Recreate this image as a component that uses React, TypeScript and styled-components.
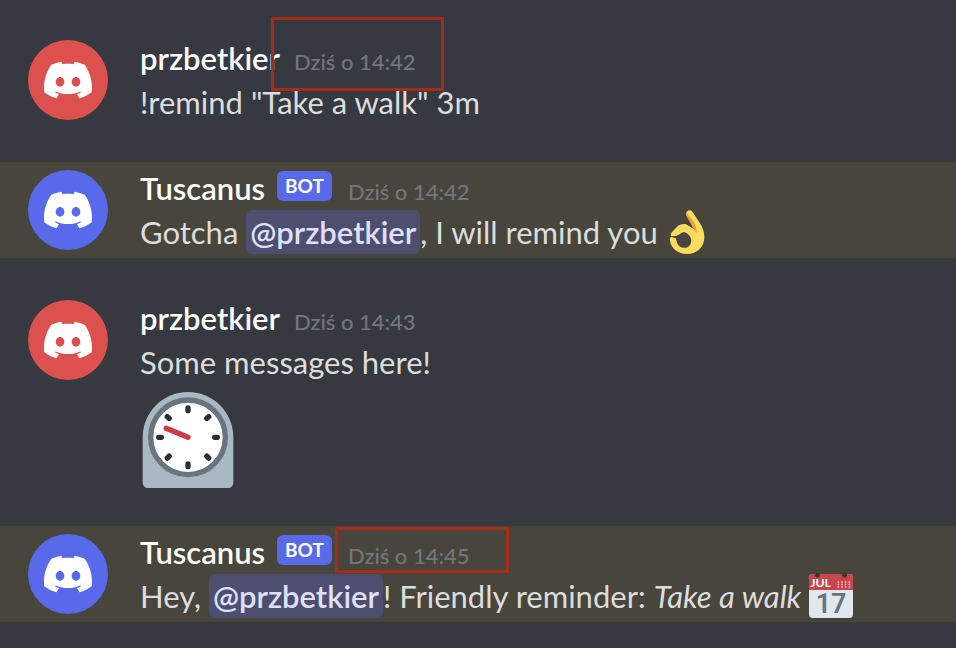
import React from "react";
import styled, { createGlobalStyle } from "styled-components";
import { SiDiscord } from "react-icons/si";

const GlobalStyle = createGlobalStyle`
  * { box-sizing: border-box; }
  body {
    margin: 0;
    background: #36393f;
    color: #dcddde;
    font-family: Lato, "Noto Sans", sans-serif;
    font-size: 31px;
    line-height: 44px;
  }
`;

const Chat = styled.main`
  display: flex;
  flex-direction: column;
  gap: 34px;
  padding: 32px 0 26px;
`;

const Row = styled.article<{ $mentioned?: boolean }>`
  display: flex;
  align-items: flex-start;
  gap: 32px;
  padding: 0 28px;
  background: ${(p) => (p.$mentioned ? "#48453d" : "transparent")};
`;

const Avatar = styled.div<{ $color: string }>`
  display: flex;
  flex: none;
  align-items: center;
  justify-content: center;
  width: 80px;
  height: 80px;
  margin-top: 8px;
  border-radius: 50%;
  background: ${(p) => p.$color};
  color: #fff;
`;

const Body = styled.div`
  flex: 1;
  min-width: 0;
  padding: 4px 0;
`;

const Header = styled.header`
  display: flex;
  align-items: baseline;
`;

const Name = styled.h2`
  margin: 0;
  color: #fff;
  font-size: 31px;
  font-weight: 600;
`;

const BotTag = styled.span`
  align-self: flex-start;
  margin: 5px 2px 0 12px;
  padding: 0 8px;
  border-radius: 6px;
  background: #5869ea;
  color: #fff;
  font-size: 19px;
  font-weight: 700;
  line-height: 30px;
`;

const Time = styled.time`
  position: relative;
  margin-left: 14px;
  color: #72767d;
  font-size: 22px;
  font-weight: 500;
  line-height: 30px;
`;

const Highlight = styled.span<{ $tall?: boolean }>`
  position: absolute;
  top: ${(p) => (p.$tall ? -30 : -14)}px;
  bottom: ${(p) => (p.$tall ? -14 : -2)}px;
  left: ${(p) => (p.$tall ? -23 : -13)}px;
  right: ${(p) => (p.$tall ? -28 : -39)}px;
  border: 3px solid #a62c1a;
  pointer-events: none;
`;

const Text = styled.p`
  margin: 0;
`;

const Mention = styled.a`
  padding: 3px 4px;
  border-radius: 6px;
  background: #4e4e70;
  color: #dee0fc;
  font-weight: 600;
  text-decoration: none;
`;

const Emoji = styled.svg`
  display: inline-block;
  width: 44px;
  height: 44px;
  overflow: visible;
  vertical-align: top;
`;

const BigEmoji = styled.svg`
  display: block;
  width: 96px;
  height: 96px;
  margin-top: 8px;
`;

const MonthText = styled.text`
  font-family: Lato, sans-serif;
  font-size: 10px;
  font-weight: 700;
`;

const DayText = styled.text`
  font-family: Roboto, sans-serif;
  font-size: 22px;
  font-weight: 600;
`;

function OkHand() {
  return (
    <Emoji viewBox="0 0 44 44" role="img" aria-label="OK hand">
      <path
        fill="#ffdc5d"
        d="M21 1.6C22.6-.3 25.2-.2 26.4 1.8L33.5 12.5C36.6 17.3 38.4 22 38.4 27C38.4 37 31 44 21 44C12 44 5 38.5 4 30.5C3.7 28.4 4.4 27 5.8 26.6C4.6 25.6 4.4 24 5.6 22.6L11 16.8C13.4 14.4 17.4 13.4 20.4 14.4L28 19L20.6 5.6C19.8 4.2 20 2.8 21 1.6z"
      />
      <path
        fill="#48453d"
        d="M10.8 25.8L16.3 22.6C18 22 20 22.4 21.8 24C24.4 26.4 25.8 29 25.2 32C24.4 36 21.6 38 18 37.8C14 37.6 11.4 35 10.8 31.4L9.8 28.2L5.4 26.9V26.2z"
      />
      <path
        fill="#ef9645"
        d="M20.6 3.2C19.8 4.4 20.2 5.4 20.8 6.6C23.2 11.4 25.4 14.6 27 18.2L30.6 23C31.2 18 28.2 12.6 24.6 7.8C23 5.6 21.8 5 20.6 3.2z"
      />
    </Emoji>
  );
}

function Calendar() {
  return (
    <Emoji viewBox="0 0 36 36" role="img" aria-label="Calendar">
      <rect width="36" height="36" rx="3" fill="#e1e8ed" />
      <path fill="#ca444b" d="M0 13V3a3 3 0 0 1 3-3h30a3 3 0 0 1 3 3v10z" />
      <g fill="#353534">
        <circle cx="7" cy="1" r="2" />
        <circle cx="29" cy="1" r="2" />
      </g>
      <MonthText x="1" y="11" fill="#fff">
        JUL
      </MonthText>
      <g fill="#f4abba">
        {[6.5, 8.6, 10.7].map((y) =>
          [24, 27, 30, 33].map((x) => <circle key={`${x}-${y}`} cx={x} cy={y} r=".8" />),
        )}
      </g>
      <DayText x="18" y="32" textAnchor="middle" fill="#66757f">
        17
      </DayText>
    </Emoji>
  );
}

function TimerClock() {
  return (
    <BigEmoji viewBox="0 0 36 36" role="img" aria-label="Timer clock">
      <path
        fill="#aab8c2"
        d="M18 0C8.6 0 1 7.6 1 17v17c0 1.1.9 2 2 2h30c1.1 0 2-.9 2-2V17C35 7.6 27.4 0 18 0z"
      />
      <circle cx="18" cy="17" r="14" fill="#fff" stroke="#66757f" strokeWidth="2" />
      <g stroke="#292f33" strokeWidth="2" strokeLinecap="round">
        {[0, 45, 90, 135, 180, 225, 270, 315].map((a) => (
          <path key={a} d="M18 6v1" transform={`rotate(${a} 18 17)`} />
        ))}
      </g>
      <path d="M18 17L9.8 13.6" stroke="#cc3a48" strokeWidth="2" strokeLinecap="round" />
    </BigEmoji>
  );
}

type MessageProps = {
  author: string;
  time: string;
  bot?: boolean;
  highlight?: "tall" | "short";
  children: React.ReactNode;
};

function Message({ author, time, bot, highlight, children }: MessageProps) {
  return (
    <Row $mentioned={bot}>
      <Avatar $color={bot ? "#5869ea" : "#dc504e"}>
        <SiDiscord size={48} aria-hidden />
      </Avatar>
      <Body>
        <Header>
          <Name>{author}</Name>
          {bot && <BotTag>BOT</BotTag>}
          <Time>
            Dziś o {time}
            {highlight && <Highlight $tall={highlight === "tall"} />}
          </Time>
        </Header>
        {children}
      </Body>
    </Row>
  );
}

export default function App() {
  return (
    <>
      <GlobalStyle />
      <Chat>
        <Message author="przbetkier" time="14:42" highlight="tall">
          <Text>!remind "Take a walk" 3m</Text>
        </Message>
        <Message author="Tuscanus" time="14:42" bot>
          <Text>
            Gotcha <Mention href="#przbetkier">@przbetkier</Mention>, I will remind you <OkHand />
          </Text>
        </Message>
        <Message author="przbetkier" time="14:43">
          <Text>Some messages here!</Text>
          <TimerClock />
        </Message>
        <Message author="Tuscanus" time="14:45" bot highlight="short">
          <Text>
            Hey, <Mention href="#przbetkier">@przbetkier</Mention>! Friendly reminder:{" "}
            <em>Take a walk</em> <Calendar />
          </Text>
        </Message>
      </Chat>
    </>
  );
}
